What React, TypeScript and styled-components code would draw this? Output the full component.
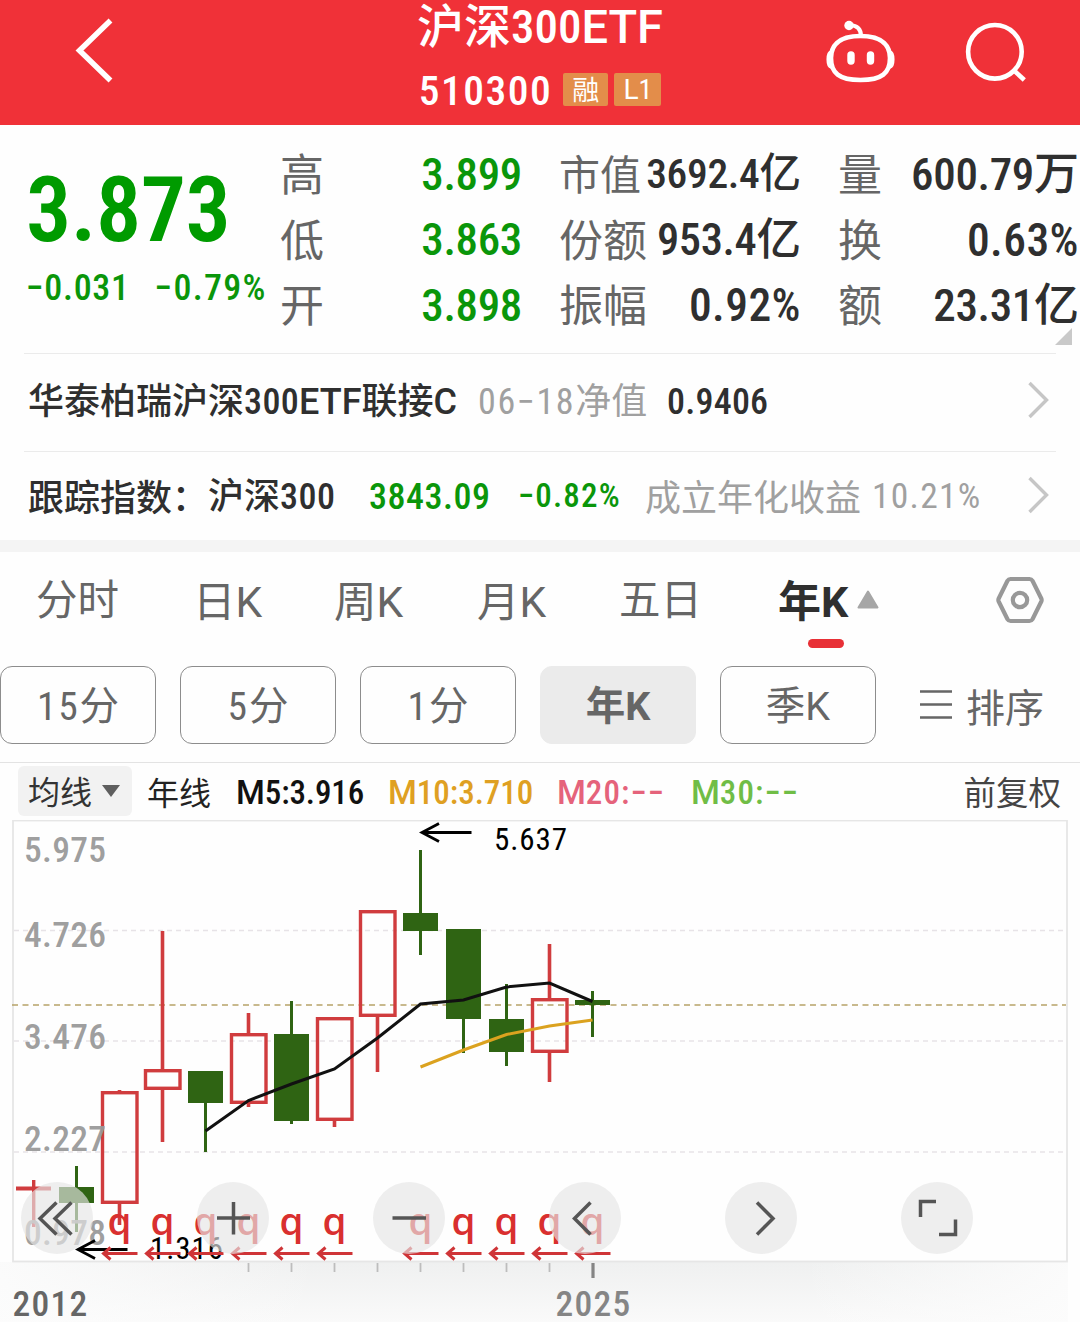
import React from "react";
import styled, { createGlobalStyle } from "styled-components";

const CJK = `"Noto Sans CJK SC", sans-serif`;
const DIGITS = `"Roboto Condensed", Roboto, "Noto Sans CJK SC", sans-serif`;
const LETTERS = `Roboto, "Noto Sans CJK SC", sans-serif`;

const Global = createGlobalStyle`
  *, *::before, *::after { box-sizing: border-box; }
  body { margin: 0; background: #fefefe; font-family: ${CJK}; color: #2f2f2f; }
`;

/* ---------- text ---------- */

const TextBox = styled.span<{ $size: number; $color?: string; $weight?: number }>`
  display: inline-block;
  font-family: ${CJK};
  font-size: ${(p) => p.$size}px;
  line-height: 1.3;
  font-weight: ${(p) => p.$weight ?? 400};
  color: ${(p) => p.$color ?? "#2f2f2f"};
  white-space: nowrap;
`;

const DigitRun = styled.span<{ $track: number }>`
  font-family: ${DIGITS};
  letter-spacing: ${(p) => p.$track}em;
`;

const LetterRun = styled.span`
  font-family: ${LETTERS};
`;

type TextProps = {
  children: string;
  size: number;
  color?: string;
  weight?: number;
  track?: number;
};

function Text({ children, size, color, weight, track = -0.008 }: TextProps) {
  const runs = children.match(/[A-Za-z]+|[0-9.:%−\- ]+|[^A-Za-z0-9.:%−\- ]+/g) ?? [];
  return (
    <TextBox $size={size} $color={color} $weight={weight}>
      {runs.map((run, i) => {
        if (/^[A-Za-z]/.test(run)) return <LetterRun key={i}>{run}</LetterRun>;
        if (/^[0-9.:%−\- ]/.test(run))
          return (
            <DigitRun key={i} $track={track}>
              {run}
            </DigitRun>
          );
        return run;
      })}
    </TextBox>
  );
}

/* ---------- layout ---------- */

const Page = styled.main`
  width: 1080px;
  height: 1322px;
  overflow: hidden;
  display: flex;
  flex-direction: column;
  background: #fefefe;
`;

const Header = styled.header`
  height: 125px;
  flex: none;
  display: grid;
  grid-template-columns: 380px 320px 380px;
  background: #f03138;
`;

const HeaderLeft = styled.div`
  padding: 17px 0 0 74px;
`;

const HeaderTitle = styled.div`
  display: flex;
  flex-direction: column;
  align-items: center;
  padding-top: 2px;
`;

const TitleLine = styled.div`
  height: 46px;
  display: flex;
  align-items: center;
`;

const CodeLine = styled.div`
  height: 62px;
  padding-top: 20px;
  display: flex;
  align-items: center;
  gap: 6px;
`;

const CodeText = styled.div`
  margin-right: 5px;
  display: flex;
`;

const Badge = styled.span<{ $width: number }>`
  width: ${(p) => p.$width}px;
  height: 33px;
  display: flex;
  align-items: center;
  justify-content: center;
  border-radius: 2px;
  background: #e38d4a;
`;

const HeaderRight = styled.div`
  display: flex;
  padding: 17px 0 0 123px;
  gap: 65px;
`;

const Quote = styled.section`
  height: 228px;
  flex: none;
  display: grid;
  grid-template-columns: 280px 242px 279px 278px;
  padding-top: 15px;
  position: relative;
`;

const PriceBlock = styled.div`
  padding: 11px 0 0 26px;
  display: flex;
  flex-direction: column;
`;

const PriceLine = styled.div`
  height: 110px;
  display: flex;
  align-items: center;
`;

const ChangeLine = styled.div`
  display: flex;
  gap: 25px;
  height: 48px;
  padding-top: 2px;
  align-items: center;
`;

const StatColumn = styled.div<{ $left: number }>`
  padding-left: ${(p) => p.$left}px;
  display: flex;
  flex-direction: column;
`;

const StatRow = styled.div`
  height: 65.5px;
  display: flex;
  align-items: center;
  justify-content: space-between;
`;

const Corner = styled.i`
  position: absolute;
  right: 8px;
  top: 203px;
  border-style: solid;
  border-width: 0 0 17px 17px;
  border-color: transparent transparent #c9c9c9 transparent;
`;

const InfoRow = styled.div<{ $height: number; $lift: number }>`
  height: ${(p) => p.$height}px;
  flex: none;
  margin: 0 24px;
  padding: 0 0 ${(p) => p.$lift}px 4px;
  border-top: 1px solid #ebebeb;
  display: flex;
  align-items: center;
`;

const InfoCell = styled.div<{ $width: number }>`
  width: ${(p) => p.$width}px;
  flex: none;
  display: flex;
`;

const InfoArrow = styled.div`
  margin-left: auto;
  padding-right: 6px;
  display: flex;
`;

const Band = styled.div`
  height: 12px;
  flex: none;
  background: #f4f4f4;
`;

const Tabs = styled.nav`
  height: 114px;
  flex: none;
  display: grid;
  grid-template-columns: 157px 141px 143px 142px 159px 217px 50px;
  padding: 19px 0 0 36px;
`;

const Tab = styled.div<{ $drop?: number }>`
  height: 76px;
  padding-top: ${(p) => p.$drop ?? 0}px;
  display: flex;
  align-items: flex-start;
`;

const ActiveTab = styled.div`
  width: 104px;
  display: flex;
  flex-direction: column;
`;

const TabMark = styled.i`
  width: 36px;
  height: 9px;
  border-radius: 5px;
  background: #e83036;
  margin: 15px 0 0 30px;
`;

const Triangle = styled.svg`
  display: block;
  margin-top: 19px;
`;

const TabFace = styled.div`
  display: flex;
  height: 53px;
  gap: 9px;
`;

const Periods = styled.div`
  height: 96px;
  flex: none;
  display: flex;
  align-items: flex-start;
  gap: 24px;
`;

const Period = styled.button<{ $active?: boolean }>`
  width: 156px;
  height: 78px;
  flex: none;
  display: flex;
  align-items: center;
  justify-content: center;
  padding: 0;
  border-radius: 12px;
  border: 1px solid ${(p) => (p.$active ? "#ebebeb" : "#8d8d8d")};
  background: ${(p) => (p.$active ? "#ebebeb" : "#fefefe")};
`;

const Sort = styled.div`
  height: 78px;
  margin-left: 19px;
  display: flex;
  align-items: center;
  gap: 14px;
`;

const Legend = styled.div`
  height: 58px;
  flex: none;
  border-top: 1px solid #e3e3e3;
  padding: 3px 19px 4px 18px;
  display: flex;
  align-items: center;
`;

const Picker = styled.div`
  width: 114px;
  height: 50px;
  flex: none;
  border-radius: 6px;
  background: #f2f2f2;
  display: flex;
  align-items: center;
  padding-left: 10px;
  gap: 10px;
  margin-right: 15px;
`;

const LegendCell = styled.div<{ $width: number }>`
  width: ${(p) => p.$width}px;
  flex: none;
  display: flex;
  padding-top: 1px;
`;

const LegendEnd = styled.div`
  margin-left: auto;
  display: flex;
`;

const ChartArea = styled.section`
  position: relative;
  height: 502px;
  flex: none;
`;

const ChartSvg = styled.svg`
  display: block;
`;

const ChartText = styled.text<{ $size: number; $weight?: number; $track?: number }>`
  font-family: ${DIGITS};
  font-size: ${(p) => p.$size}px;
  font-weight: ${(p) => p.$weight ?? 400};
  letter-spacing: ${(p) => p.$track ?? 0.035}em;
`;

const Marker = styled.text`
  font-family: "Open Sans", sans-serif;
  font-size: 38.5px;
  font-weight: 600;
  fill: #d92f2f;
`;

const Controls = styled.div`
  position: absolute;
  left: 21px;
  top: 362px;
  display: flex;
  gap: 104px;
`;

const Control = styled.button`
  width: 72px;
  height: 72px;
  padding: 0;
  border: 0;
  border-radius: 50%;
  background: rgba(229, 229, 229, 0.66);
  display: flex;
`;

/* ---------- icons ---------- */

const BackIcon = () => (
  <svg width="44" height="68" fill="none" stroke="#fff" strokeWidth="5.5">
    <path d="M36.5 3.5 L5.5 33.5 L36.5 63.5" />
  </svg>
);

const RobotIcon = () => (
  <svg width="76" height="70" viewBox="824 17 76 70" fill="none" stroke="#fff" strokeWidth="4.6">
    <path d="M861.5 36 C885 36 891 47 891 58 C891 73 883 80 861.5 80 C840 80 832 73 832 58 C832 47 838 36 861.5 36 Z" />
    <path d="M862 36 C862 29 858 25.500 851 25" strokeWidth="4" />
    <circle cx="850" cy="25.500" r="4.700" fill="#fff" stroke="none" />
    <path d="M832 51 C827 52 827 67 832 68 Z M891 51 C896 52 896 67 891 68 Z" fill="#fff" strokeWidth="1.600" />
    <path d="M852 55 V61 M871.500 55 V61" strokeWidth="7.400" strokeLinecap="round" />
  </svg>
);

const SearchIcon = () => (
  <svg width="64" height="70" viewBox="964 17 64 70" fill="none" stroke="#fff" strokeWidth="4.6">
    <circle cx="994.900" cy="51.800" r="26.800" />
    <path d="M1013.500 70 L1024.300 80" />
  </svg>
);

const RowArrow = () => (
  <svg width="22" height="40" fill="none" stroke="#c6c6c6" strokeWidth="3.4">
    <path d="M1.500 3 L18.500 20 L1.500 37" />
  </svg>
);

const SettingsIcon = () => (
  <svg width="50" height="50" viewBox="0 0 50 50" fill="none" stroke="#989898" strokeWidth="4.2">
    <path d="M15.500 4 H34.500 Q36.500 4 37.500 5.700 L46.300 23.500 Q47 25 46.300 26.500 L37.500 44.300 Q36.500 46 34.500 46 H15.500 Q13.500 46 12.500 44.300 L3.700 26.500 Q3 25 3.700 23.500 L12.500 5.700 Q13.500 4 15.500 4 Z" strokeLinejoin="round" />
    <circle cx="25" cy="25" r="7.200" />
  </svg>
);

const SortIcon = () => (
  <svg width="33" height="32" stroke="#666" strokeWidth="2.400">
    <path d="M1 2.500 H33 M1 15.500 H33 M1 28.500 H33" />
  </svg>
);

/* ---------- data ---------- */

const GREEN = "#0a960a";
const INK = "#2f2f2f";
const GREY = "#666";
const SOFT = "#a0a0a0";

const stats: { left: number; color: string; rows: [string, string, number][] }[] = [
  { left: 0, color: GREEN, rows: [["高", "3.899", 45], ["低", "3.863", 45], ["开", "3.898", 45]] },
  { left: 37, color: INK, rows: [["市值", "3692.4亿", 41.5], ["份额", "953.4亿", 44.5], ["振幅", "0.92%", 45.5]] },
  { left: 37, color: INK, rows: [["量", "600.79万", 45], ["换", "0.63%", 45.5], ["额", "23.31亿", 45]] },
];

const FIRST = 33.5;
const STEP = 43;

type Candle = { up: boolean; top: number; bottom: number; high: number; low: number };
const candles: Candle[] = [
  { up: true, top: 1186.5, bottom: 1190.5, high: 1180, low: 1227 },
  { up: false, top: 1187, bottom: 1203, high: 1166, low: 1232 },
  { up: true, top: 1091, bottom: 1204, high: 1090, low: 1225 },
  { up: true, top: 1069, bottom: 1090, high: 931, low: 1142 },
  { up: false, top: 1071, bottom: 1103, high: 1071, low: 1152 },
  { up: true, top: 1033, bottom: 1104, high: 1013, low: 1107 },
  { up: false, top: 1034, bottom: 1121, high: 1001, low: 1124 },
  { up: true, top: 1017, bottom: 1121, high: 1017, low: 1127 },
  { up: true, top: 910, bottom: 1017, high: 910, low: 1072 },
  { up: false, top: 913, bottom: 931, high: 850, low: 955 },
  { up: false, top: 929, bottom: 1019, high: 929, low: 1053 },
  { up: false, top: 1019, bottom: 1052, high: 984, low: 1066 },
  { up: true, top: 998, bottom: 1053, high: 944, low: 1082 },
  { up: false, top: 1000, bottom: 1005, high: 991, low: 1037 },
];

const ma5 = [1131, 1100.5, 1084, 1069, 1038, 1004, 1000, 987, 983, 1001.5];
const ma10 = [1067, 1050, 1034.5, 1026, 1020];
const line = (ys: number[], from: number) =>
  ys.map((y, i) => `${FIRST + STEP * (from + i)},${y}`).join(" ");

const markers = [2, 3, 4, 5, 6, 7, 9, 10, 11, 12, 13];

function CandleShape({ c, x }: { c: Candle; x: number }) {
  if (!c.up) {
    return (
      <g fill="#2f6413">
        <rect x={x - 17.5} y={c.top} width="35" height={c.bottom - c.top} />
        <rect x={x - 1.5} y={c.high} width="3" height={c.low - c.high} />
      </g>
    );
  }
  if (c.bottom - c.top < 6) {
    return (
      <g fill="#d03c3e">
        <rect x={x - 17.5} y={c.top} width="35" height={c.bottom - c.top} />
        <rect x={x - 1.5} y={c.high} width="3.4" height={c.low - c.high} />
      </g>
    );
  }
  return (
    <g>
      <path d={`M${x} ${c.high} V${c.top + 1} M${x} ${c.bottom - 1} V${c.low}`} stroke="#d03c3e" strokeWidth="3.6" />
      <rect x={x - 17} y={c.top + 1.7} width="34.500" height={c.bottom - c.top - 3.4} fill="none" stroke="#d03c3e" strokeWidth="3.4" />
    </g>
  );
}

function Chart() {
  const labels: [string, number][] = [
    ["5.975", 862], ["4.726", 947], ["3.476", 1049], ["2.227", 1151], ["0.978", 1245],
  ];
  return (
    <ChartSvg width="1080" height="502" viewBox="0 820 1080 502">
      <defs>
        <linearGradient id="foot" x1="0" y1="0" x2="0" y2="1">
          <stop offset="0" stopColor="#eff0f0" />
          <stop offset="1" stopColor="#fafafa" />
        </linearGradient>
        <linearGradient id="sides" x1="0" y1="0" x2="1" y2="0">
          <stop offset="0" stopColor="#fcfcfc" stopOpacity="0.9" />
          <stop offset="0.300" stopColor="#fcfcfc" stopOpacity="0" />
          <stop offset="0.750" stopColor="#fcfcfc" stopOpacity="0" />
          <stop offset="1" stopColor="#fcfcfc" stopOpacity="0.9" />
        </linearGradient>
      </defs>
      <rect x="0" y="1262" width="1068" height="60" fill="url(#foot)" />
      <rect x="0" y="1262" width="1068" height="60" fill="url(#sides)" />
      <rect x="13" y="820.500" width="1054" height="441" fill="none" stroke="#e6e6e6" strokeWidth="1.800" />
      <path d="M14 930.500 H1066 M14 1041 H1066 M14 1152 H1066" stroke="#e7e3e7" strokeWidth="1.600" strokeDasharray="5 4" />
      <path d="M12 1005 H1066" stroke="#b7a268" strokeWidth="1.700" strokeDasharray="6 4.500" />

      {candles.map((c, i) => (
        <CandleShape key={i} c={c} x={FIRST + STEP * i} />
      ))}
      <polyline points={line(ma5, 4)} fill="none" stroke="#111" strokeWidth="3" />
      <polyline points={line(ma10, 9)} fill="none" stroke="#dba21f" strokeWidth="3" />

      {labels.map(([t, y]) => (
        <ChartText key={t} x="24" y={y} $size={35.5} $weight={500} $track={0.008} fill="#999" fillOpacity="0.95">
          {t}
        </ChartText>
      ))}

      <path d="M422 832.500 H471.500 M439 823.500 L422 832.500 L439 841.500" fill="none" stroke="#000" strokeWidth="2.800" />
      <ChartText x="494" y="850" $size={31} $track={0.03}>5.637</ChartText>
      <path d="M78 1249.500 H127.500 M95 1240.500 L78 1249.500 L95 1258.500" fill="none" stroke="#000" strokeWidth="2.800" />
      <ChartText x="150" y="1259" $size={31} $track={0.03}>1.316</ChartText>

      {markers.map((i) => {
        const x = FIRST + STEP * i;
        return (
          <g key={i}>
            <Marker x={x} y="1235" textAnchor="middle">q</Marker>
            <path
              d={`M${x - 16} 1253.500 H${x + 18} M${x - 9} 1247.500 L${x - 16} 1253.500 L${x - 9} 1259.500`}
              fill="none"
              stroke="#cf3437"
              strokeWidth="3"
            />
          </g>
        );
      })}

      {[5, 6, 7, 8, 9, 10, 11, 12].map((i) => (
        <path key={i} d={`M${FIRST + STEP * i} 1263 V1272`} stroke="#bdbdbd" strokeWidth="1.800" />
      ))}
      <path d="M593 1263 V1278" stroke="#858585" strokeWidth="3.200" />
      <ChartText x="12.500" y="1316" $size={35.5} $weight={500} fill="#666">2012</ChartText>
      <ChartText x="555.500" y="1316" $size={35.5} $weight={500} fill="#858585">2025</ChartText>
    </ChartSvg>
  );
}

const controlPaths = [
  "M35.500 20.500 L19 36.500 L35.500 52.500 M50.500 20.500 L34 36.500 L50.500 52.500",
  "M20 36 H53 M36.500 20 V52.500",
  "M19.500 36 H53",
  "M41.500 20.500 L25.500 36.500 L41.500 52.500",
  "M32 20.500 L48 36.500 L32 52.500",
  "M19.500 35 V19.500 H35 M54.500 37.500 V52.500 H38",
];

export default function App() {
  return (
    <Page>
      <Global />
      <Header>
        <HeaderLeft>
          <BackIcon />
        </HeaderLeft>
        <HeaderTitle>
          <TitleLine>
            <Text size={47} color="#fff" weight={500} track={0}>沪深300ETF</Text>
          </TitleLine>
          <CodeLine>
            <CodeText>
              <Text size={41.5} color="#fff" weight={500} track={0.036}>510300</Text>
            </CodeText>
            <Badge $width={45}>
              <Text size={27} color="#fff">融</Text>
            </Badge>
            <Badge $width={47}>
              <Text size={28} color="#fff">L1</Text>
            </Badge>
          </CodeLine>
        </HeaderTitle>
        <HeaderRight>
          <RobotIcon />
          <SearchIcon />
        </HeaderRight>
      </Header>

      <Quote>
        <PriceBlock>
          <PriceLine>
            <Text size={90} color="#009b00" weight={600} track={-0.005}>3.873</Text>
          </PriceLine>
          <ChangeLine>
            <Text size={36} color={GREEN} weight={500} track={0.018}>−0.031</Text>
            <Text size={36} color={GREEN} weight={500} track={0.034}>−0.79%</Text>
          </ChangeLine>
        </PriceBlock>
        {stats.map((col, i) => (
          <StatColumn key={i} $left={col.left}>
            {col.rows.map(([label, value, size]) => (
              <StatRow key={label}>
                <Text size={label === "市值" ? 41 : 44} color={GREY}>{label}</Text>
                <Text size={size} color={col.color} weight={500} track={value.endsWith("%") ? 0.01 : undefined}>{value}</Text>
              </StatRow>
            ))}
          </StatColumn>
        ))}
        <Corner />
      </Quote>

      <InfoRow $height={98} $lift={5}>
        <InfoCell $width={450}>
          <Text size={36} weight={500} track={0.01}>华泰柏瑞沪深300ETF联接C</Text>
        </InfoCell>
        <InfoCell $width={189}>
          <Text size={36} color={SOFT} track={0.045}>06−18净值</Text>
        </InfoCell>
        <Text size={36} weight={500} track={0.006}>0.9406</Text>
        <InfoArrow>
          <RowArrow />
        </InfoArrow>
      </InfoRow>
      <InfoRow $height={89} $lift={2}>
        <InfoCell $width={180}>
          <Text size={36} weight={500}>跟踪指数：</Text>
        </InfoCell>
        <InfoCell $width={161}>
          <Text size={36} weight={500} track={0.015}>沪深300</Text>
        </InfoCell>
        <InfoCell $width={149}>
          <Text size={36} color={GREEN} weight={500} track={0.014}>3843.09</Text>
        </InfoCell>
        <InfoCell $width={127}>
          <Text size={33} color={GREEN} weight={500} track={0.035}>−0.82%</Text>
        </InfoCell>
        <InfoCell $width={227}>
          <Text size={36} color={SOFT}>成立年化收益</Text>
        </InfoCell>
        <Text size={35.5} color={SOFT} track={0.035}>10.21%</Text>
        <InfoArrow>
          <RowArrow />
        </InfoArrow>
      </InfoRow>
      <Band />

      <Tabs>
        {["分时", "日K", "周K", "月K", "五日"].map((t) => (
          <Tab key={t}>
            <Text size={t.endsWith("K") ? 42.5 : 41.5} color={GREY}>{t}</Text>
          </Tab>
        ))}
        <ActiveTab>
          <TabFace>
            <Text size={43} weight={700}>年K</Text>
            <Triangle width="22" height="20">
              <path d="M11 1.500 L20.500 17.500 H1.500 Z" fill="#a6a6a6" stroke="#a6a6a6" strokeWidth="2" strokeLinejoin="round" />
            </Triangle>
          </TabFace>
          <TabMark />
        </ActiveTab>
        <Tab $drop={4}>
          <SettingsIcon />
        </Tab>
      </Tabs>

      <Periods>
        {["15分", "5分", "1分", "年K", "季K"].map((t) => (
          <Period key={t} $active={t === "年K"}>
            <Text size={39.5} color={GREY} weight={t === "年K" ? 700 : 400} track={0.045}>{t}</Text>
          </Period>
        ))}
        <Sort>
          <SortIcon />
          <Text size={39} color={GREY}>排序</Text>
        </Sort>
      </Periods>

      <Legend>
        <Picker>
          <Text size={32} color="#333">均线</Text>
          <svg width="18" height="12">
            <path d="M0 0 H18 L9 12 Z" fill="#5f5f5f" />
          </svg>
        </Picker>
        <LegendCell $width={89}>
          <Text size={32} color="#222">年线</Text>
        </LegendCell>
        <LegendCell $width={152}>
          <Text size={33} color="#111" weight={500} track={-0.004}>M5:3.916</Text>
        </LegendCell>
        <LegendCell $width={169}>
          <Text size={33} color="#dfa022" weight={500} track={-0.001}>M10:3.710</Text>
        </LegendCell>
        <LegendCell $width={134}>
          <Text size={33} color="#e5637b" weight={500} track={0.033}>M20:−−</Text>
        </LegendCell>
        <LegendCell $width={134}>
          <Text size={33} color="#70bd46" weight={500} track={0.033}>M30:−−</Text>
        </LegendCell>
        <LegendEnd>
          <Text size={32.5} color="#444">前复权</Text>
        </LegendEnd>
      </Legend>

      <ChartArea>
        <Chart />
        <Controls>
          {controlPaths.map((d) => (
            <Control key={d}>
              <svg width="72" height="72" fill="none" stroke="#555" strokeWidth="3.500">
                <path d={d} />
              </svg>
            </Control>
          ))}
        </Controls>
      </ChartArea>
    </Page>
  );
}
